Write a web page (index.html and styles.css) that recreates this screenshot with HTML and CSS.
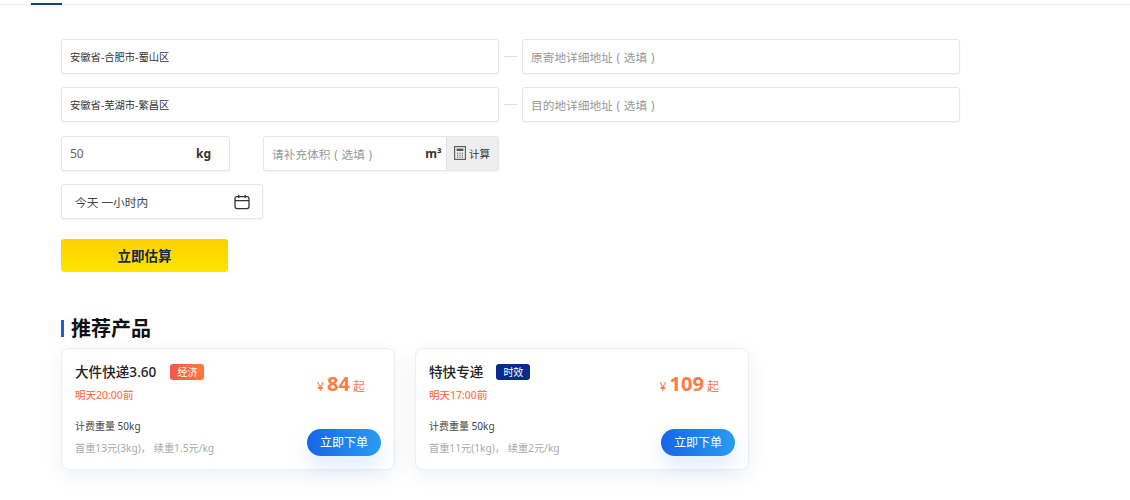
FILE: index.html
```html
<!DOCTYPE html>
<html lang="zh-CN">
<head>
    <meta charset="UTF-8">
    <title>运费估算</title>
    <link rel="stylesheet" href="styles.css">
</head>
<body>
    <div class="tabs">
        <div class="tab-active"></div>
    </div>
    <div class="page">
        <div class="form">
            <div class="address-row">
                <div class="field field-address"><span class="city">安徽省-合肥市-蜀山区</span></div>
                <div class="dash"></div>
                <div class="field field-detail"><span class="placeholder">原寄地详细地址<span class="paren">(</span>选填<span class="paren">)</span></span></div>
            </div>
            <div class="address-row">
                <div class="field field-address"><span class="city">安徽省-芜湖市-繁昌区</span></div>
                <div class="dash"></div>
                <div class="field field-detail"><span class="placeholder">目的地详细地址<span class="paren">(</span>选填<span class="paren">)</span></span></div>
            </div>
            <div class="measure-row">
                <div class="field field-weight">
                    <span class="value">50</span>
                    <span class="unit">kg</span>
                </div>
                <div class="field field-volume">
                    <span class="placeholder">请补充体积<span class="paren">(</span>选填<span class="paren">)</span></span>
                    <span class="unit">m³</span>
                    <div class="calc">
                        <svg class="calc-icon" viewBox="0 0 12 14" width="12" height="14">
                            <rect x="0.6" y="0.6" width="10.8" height="12.8" fill="none" stroke="#555" stroke-width="1.1"/>
                            <rect x="2.6" y="2.6" width="6.8" height="2.4" fill="#555"/>
                            <path d="M3 7.2h1.2M5.4 7.2h1.2M7.8 7.2h1.2M3 9.2h1.2M5.4 9.2h1.2M7.8 9.2h1.2M3 11.2h1.2M5.4 11.2h1.2M7.8 11.2h1.2" stroke="#555" stroke-width="1"/>
                        </svg>
                        <span>计算</span>
                    </div>
                </div>
            </div>
            <div class="field field-date">
                <span class="value-date">今天 一小时内</span>
                <svg viewBox="0 0 16 16" width="16" height="16">
                    <rect x="1" y="2.6" width="14" height="12" rx="2" fill="none" stroke="#333" stroke-width="1.3"/>
                    <path d="M1 6.6h14M4.8 0.8v3.2M11.2 0.8v3.2" fill="none" stroke="#333" stroke-width="1.3"/>
                </svg>
            </div>
            <button class="estimate">立即估算</button>
        </div>

        <h2 class="section-title">推荐产品</h2>
        <div class="products">
            <div class="card">
                <div class="card-top">
                    <div>
                        <div class="card-name">
                            <span>大件快递3.60</span>
                            <span class="tag tag-orange">经济</span>
                        </div>
                        <div class="card-time">明天20:00前</div>
                    </div>
                    <div class="price"><small>¥</small> <b>84</b> <small>起</small></div>
                </div>
                <div class="card-bottom">
                    <div class="card-info">
                        <div class="card-weight">计费重量 50kg</div>
                        <div class="card-rule">首重13元(3kg)， 续重1.5元/kg</div>
                    </div>
                    <button class="order">立即下单</button>
                </div>
            </div>
            <div class="card">
                <div class="card-top">
                    <div>
                        <div class="card-name">
                            <span>特快专递</span>
                            <span class="tag tag-blue">时效</span>
                        </div>
                        <div class="card-time">明天17:00前</div>
                    </div>
                    <div class="price"><small>¥</small> <b>109</b> <small>起</small></div>
                </div>
                <div class="card-bottom">
                    <div class="card-info">
                        <div class="card-weight">计费重量 50kg</div>
                        <div class="card-rule">首重11元(1kg)， 续重2元/kg</div>
                    </div>
                    <button class="order">立即下单</button>
                </div>
            </div>
        </div>
    </div>
</body>
</html>
```

FILE: styles.css
```css
* {
    box-sizing: border-box;
}
body {
    margin: 0;
    height: 500px;
    overflow: hidden;
    background-color: #fff;
    font-family: "Noto Sans", "Noto Sans CJK SC", sans-serif;
    color: #333;
}
.tabs {
    height: 5px;
    padding-left: 31px;
    border-bottom: 1px solid #f0f0f0;
}
.tab-active {
    width: 31px;
    height: 5px;
    border-bottom: 2px solid #0f3f8c;
}
.page {
    padding: 34px 0 0 61px;
}
.form {
    display: flex;
    flex-direction: column;
    align-items: flex-start;
    gap: 13.4px;
}
.address-row {
    display: flex;
    align-items: center;
}
.field {
    display: flex;
    align-items: center;
    height: 35px;
    background-color: #fff;
    border: 1px solid #e6e6e6;
    border-radius: 3px;
    box-shadow: 0 1px 2px rgba(0, 0, 0, 0.05);
}
.field-address {
    width: 437.5px;
    padding-left: 8px;
}
.field-detail {
    width: 438px;
    padding-left: 8px;
}
.dash {
    width: 13px;
    height: 1px;
    margin: 0 5px 0 5.5px;
    background-color: #ddd;
}
.city {
    font-size: 10.3px;
    color: #333;
}
.placeholder {
    font-size: 11.7px;
    color: #999;
}
.paren {
    display: inline-block;
    width: 11px;
    text-align: center;
}
.measure-row {
    display: flex;
    gap: 33px;
}
.field-weight {
    width: 169px;
    padding: 0 18px 0 8px;
    justify-content: space-between;
}
.value {
    font-size: 12px;
    color: #666;
}
.unit {
    font-size: 12px;
    font-weight: 700;
    color: #333;
}
.field-volume {
    width: 235.5px;
    padding-left: 8px;
    justify-content: space-between;
    overflow: hidden;
}
.field-volume .unit {
    margin-left: auto;
    margin-right: 4px;
}
.calc {
    display: flex;
    align-items: center;
    justify-content: center;
    gap: 3px;
    width: 52px;
    height: 100%;
    background-color: #eee;
    border-left: 1px solid #e2e2e2;
    font-size: 10.5px;
    color: #333;
}
.field-date {
    width: 202px;
    padding: 0 12px 0 13px;
    justify-content: space-between;
}
.value-date {
    font-size: 11.7px;
    color: #444;
}
.estimate {
    width: 167px;
    height: 33px;
    margin-top: 6px;
    border: none;
    border-radius: 3px;
    background: linear-gradient(180deg, #ffcf00, #ffe600);
    font-family: inherit;
    font-size: 13.5px;
    font-weight: 700;
    color: #12294a;
}
.section-title {
    margin: 45px 0 7px;
    padding-left: 10px;
    position: relative;
    font-size: 20px;
    line-height: 24px;
    font-weight: 700;
    color: #111;
}
.section-title::before {
    content: "";
    position: absolute;
    left: 0;
    top: 3px;
    width: 3px;
    height: 17px;
    background-color: #1d5be0;
}
.products {
    display: flex;
    gap: 20px;
}
.card {
    display: flex;
    flex-direction: column;
    justify-content: space-between;
    width: 334px;
    height: 122px;
    padding: 14px 13px 12px 13px;
    border: 1px solid #eee;
    border-radius: 8px;
    background-color: #fff;
    box-shadow: 0 6px 20px rgba(30, 60, 120, 0.07);
}
.card-top {
    display: flex;
    justify-content: space-between;
    align-items: center;
}
.card-name {
    display: flex;
    align-items: center;
    gap: 13px;
    font-size: 13.6px;
    line-height: 18px;
    font-weight: 500;
    color: #222;
}
.tag {
    padding: 0 7px;
    border-radius: 3px;
    font-size: 10px;
    line-height: 16px;
    font-weight: 400;
    color: #fff;
}
.tag-orange {
    margin-left: 1px;
    background: linear-gradient(90deg, #f4574c, #ff7a35);
}
.tag-blue {
    background-color: #0a2a8c;
}
.card-time {
    margin-top: 7px;
    font-size: 10.5px;
    line-height: 14px;
    font-weight: 500;
    color: #ff7a45;
}
.price {
    margin-top: 2px;
    padding-right: 16px;
    font-size: 12px;
    color: #ff7a45;
}
.price b {
    font-size: 20px;
    font-weight: 700;
}
.price small {
    font-size: 12px;
}
.card-bottom {
    display: flex;
    justify-content: space-between;
    align-items: flex-end;
}
.card-info {
    padding-bottom: 2px;
}
.card-weight {
    font-size: 10px;
    line-height: 14px;
    color: #444;
}
.card-rule {
    margin-top: 8px;
    font-size: 10.2px;
    line-height: 14px;
    color: #aaa;
}
.order {
    width: 74px;
    height: 27px;
    margin-bottom: 1px;
    border: none;
    border-radius: 14px;
    background: linear-gradient(90deg, #1666e8, #2b9bf0);
    box-shadow: 0 10px 20px rgba(40, 120, 240, 0.15);
    font-family: inherit;
    font-size: 12px;
    color: #fff;
}
```
